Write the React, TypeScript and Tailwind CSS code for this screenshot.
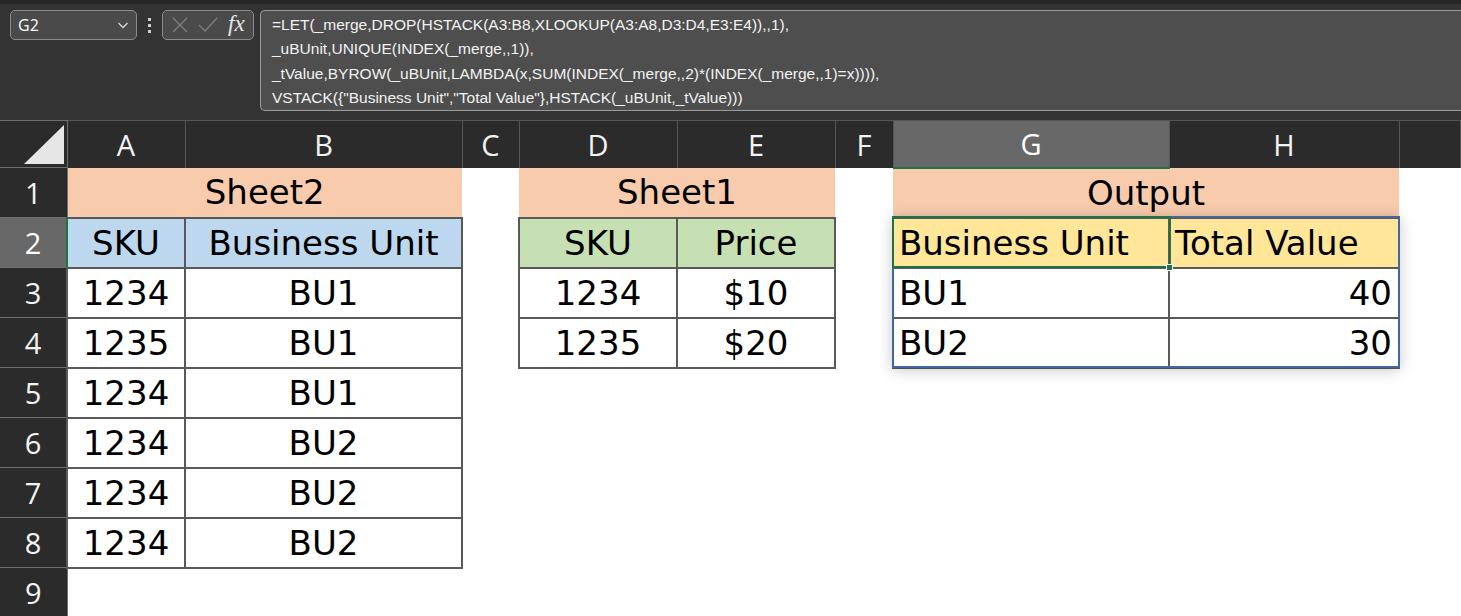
import React from 'react';

const CELL_FONT = { fontFamily: '"DejaVu Sans", sans-serif' };

type Cell = {
  text?: string;
  bg?: string;
  border?: boolean;
  align?: 'left' | 'center' | 'right';
  span?: number;
};

const E: Cell = {};
const data = (text: string, align: Cell['align'] = 'center'): Cell => ({ text, border: true, align });

const rows: Cell[][] = [
  [
    { text: 'Sheet2', bg: 'bg-[#f8cbad]', span: 2 },
    E,
    { text: 'Sheet1', bg: 'bg-[#f8cbad]', span: 2 },
    E,
    { text: 'Output', bg: 'bg-[#f8cbad]', span: 2 },
    E,
  ],
  [
    { text: 'SKU', bg: 'bg-[#bdd7ee]', border: true },
    { text: 'Business Unit', bg: 'bg-[#bdd7ee]', border: true },
    E,
    { text: 'SKU', bg: 'bg-[#c6e0b4]', border: true },
    { text: 'Price', bg: 'bg-[#c6e0b4]', border: true },
    E,
    { text: 'Business Unit', bg: 'bg-[#ffe699]', border: true, align: 'left' },
    { text: 'Total Value', bg: 'bg-[#ffe699]', border: true, align: 'left' },
    E,
  ],
  [data('1234'), data('BU1'), E, data('1234'), data('$10'), E, data('BU1', 'left'), data('40', 'right'), E],
  [data('1235'), data('BU1'), E, data('1235'), data('$20'), E, data('BU2', 'left'), data('30', 'right'), E],
  [data('1234'), data('BU1'), E, E, E, E, E, E, E],
  [data('1234'), data('BU2'), E, E, E, E, E, E, E],
  [data('1234'), data('BU2'), E, E, E, E, E, E, E],
  [data('1234'), data('BU2'), E, E, E, E, E, E, E],
  [E, E, E, E, E, E, E, E, E],
];

const columns = ['A', 'B', 'C', 'D', 'E', 'F', 'G', 'H', ''];
const widths = ['w-[67px]', 'w-[118px]', 'w-[277px]', 'w-[57px]', 'w-[158px]', 'w-[158px]', 'w-[58px]', 'w-[276px]', 'w-[230px]', ''];

function FormulaBar() {
  return (
    <div className="h-[120px] bg-[#333333] border-t-[4px] border-[#262626] flex items-start pt-[6px] pl-[10px]">
      <div className="w-[127px] h-[30px] rounded-[5px] border border-[#8c8c8c] bg-[#4a4a4a] flex items-center justify-between pl-[7px] pr-[6px]">
        <span className="text-[16px] text-white" style={{ fontFamily: '"Open Sans", sans-serif' }}>G2</span>
        <svg width="14" height="14" viewBox="0 0 14 14" fill="none" stroke="#d8d8d8" strokeWidth="1.3">
          <path d="M2.5 5l4.5 4.5L11.5 5" />
        </svg>
      </div>
      <div className="w-[25px] h-[30px] flex flex-col items-center justify-center gap-[3px]">
        <span className="w-[3px] h-[3px] bg-[#cfcfcf]" />
        <span className="w-[3px] h-[3px] bg-[#cfcfcf]" />
        <span className="w-[3px] h-[3px] bg-[#cfcfcf]" />
      </div>
      <div className="w-[92px] h-[30px] rounded-[5px] border border-[#8c8c8c] bg-[#4a4a4a] flex items-center pl-[8px] gap-[9px]">
        <svg width="18" height="18" viewBox="0 0 18 18" fill="none" stroke="#7d7d7d" strokeWidth="1.4">
          <path d="M2 2l14 14M16 2L2 16" />
        </svg>
        <svg width="20" height="16" viewBox="0 0 20 16" fill="none" stroke="#7d7d7d" strokeWidth="1.4">
          <path d="M1 8l6 6L19 1" />
        </svg>
        <span className="text-[23px] italic text-[#e8e8e8] leading-none -mt-[3px] ml-[1px]" style={{ fontFamily: '"Liberation Serif", serif' }}>fx</span>
      </div>
      <div className="ml-[6px] flex-1 h-[101px] rounded-l-[5px] border border-r-0 border-[#9b9b9b] bg-[#4e4e4e] pl-[11px] pt-[2px] text-[#f2f2f2] text-[15.5px] leading-[24.3px]" style={{ fontFamily: '"Liberation Sans", sans-serif' }}>
        <div>=LET(_merge,DROP(HSTACK(A3:B8,XLOOKUP(A3:A8,D3:D4,E3:E4)),,1),</div>
        <div>_uBUnit,UNIQUE(INDEX(_merge,,1)),</div>
        <div>_tValue,BYROW(_uBUnit,LAMBDA(x,SUM(INDEX(_merge,,2)*(INDEX(_merge,,1)=x)))),</div>
        <div>VSTACK({'{'}"Business Unit","Total Value"{'}'},HSTACK(_uBUnit,_tValue)))</div>
      </div>
    </div>
  );
}

function Sheet() {
  const headFont = { fontFamily: '"Open Sans", sans-serif' };
  return (
    <div className="relative">
      <table className="table-fixed border-collapse w-[1461px]">
        <colgroup>
          {widths.map((w, i) => (
            <col key={i} className={w} />
          ))}
        </colgroup>
        <thead>
          <tr className="h-[47px]">
            <th className="p-0 bg-[#2b2b2b] border-r border-b border-t border-[#6e6e6e] relative">
              <svg className="absolute right-[3px] bottom-[3px]" width="40" height="39" viewBox="0 0 40 39">
                <path d="M40 0V39H0Z" fill="#e6e6e6" />
              </svg>
            </th>
            {columns.map((c, i) => (
              <th
                key={i}
                className={
                  'p-0 font-normal text-[29px] border-t border-r border-[#555555] ' +
                  (c === 'G' ? 'bg-[#686868] text-white border-b-2 border-b-[#217346]' : 'bg-[#2b2b2b] text-[#f3f3f3]')
                }
                style={headFont}
              >
                {c}
              </th>
            ))}
          </tr>
        </thead>
        <tbody>
          {rows.map((r, ri) => (
            <tr key={ri} className="h-[50px]">
              <td
                className={
                  'p-0 text-center text-[29px] border-b border-[#6e6e6e] ' +
                  (ri === 1 ? 'bg-[#686868] text-white border-r-2 border-r-[#217346]' : 'bg-[#2b2b2b] text-[#f3f3f3] border-r')
                }
                style={headFont}
              >
                {ri + 1}
              </td>
              {r.map((cell, ci) => (
                <td
                  key={ci}
                  colSpan={cell.span}
                  className={
                    'p-0 text-[34px] text-black leading-none whitespace-nowrap ' +
                    (cell.bg ?? 'bg-white') +
                    (cell.border ? ' border-2 border-[#595959]' : '') +
                    (cell.align === 'left' ? ' text-left pl-[5px]' : cell.align === 'right' ? ' text-right pr-[6px]' : ' text-center')
                  }
                  style={CELL_FONT}
                >
                  {cell.text}
                </td>
              ))}
            </tr>
          ))}
        </tbody>
      </table>
      {/* spill range outline with shadow */}
      <div className="absolute left-[892px] top-[96px] w-[508px] h-[152px] border-2 border-[#46679c] shadow-[0_2px_14px_rgba(0,0,0,0.22)] pointer-events-none" />
      {/* active cell G2 */}
      <div className="absolute left-[892px] top-[96px] w-[279px] h-[52px] border-2 border-[#217346] pointer-events-none" />
      <div className="absolute left-[1166px] top-[144px] w-[7px] h-[7px] bg-[#217346] border border-white pointer-events-none" />
    </div>
  );
}

export default function App() {
  return (
    <div className="w-[1461px] h-[616px] overflow-hidden bg-white">
      <FormulaBar />
      <Sheet />
    </div>
  );
}
